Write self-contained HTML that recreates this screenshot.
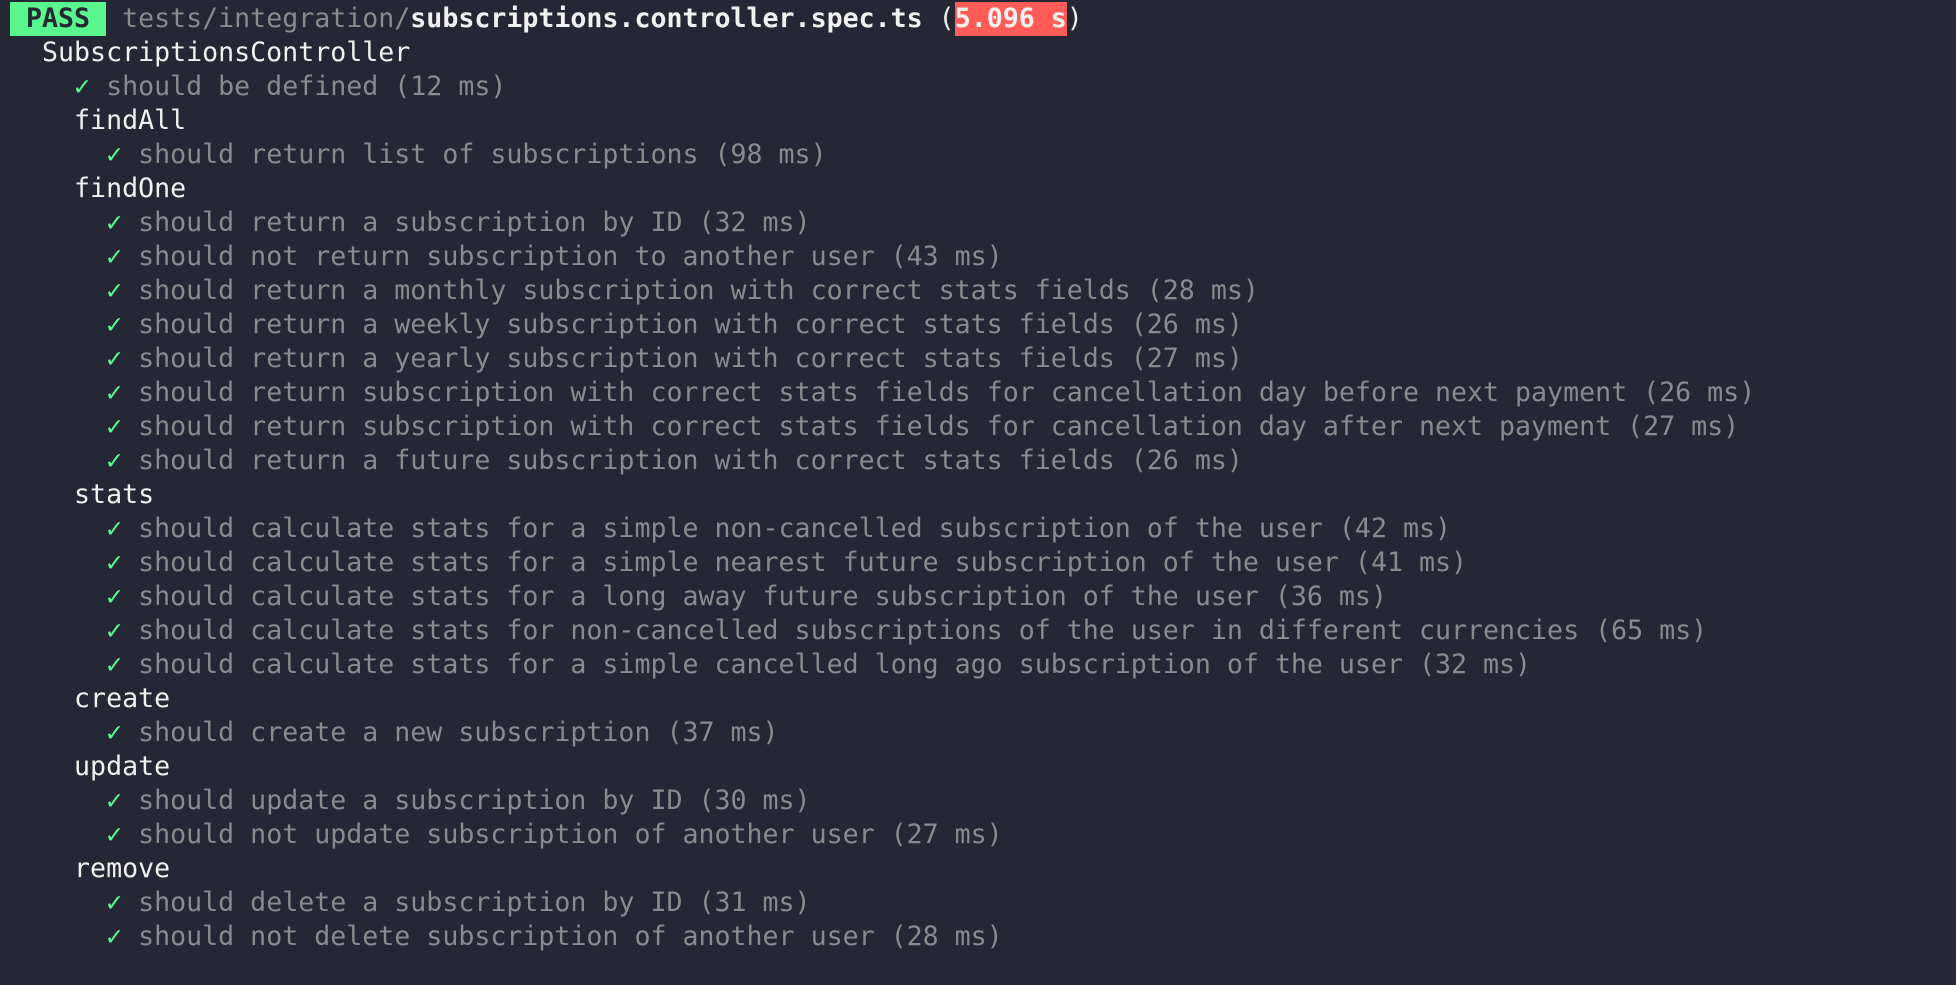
<!DOCTYPE html>
<html><head><meta charset="utf-8"><style>
html,body{margin:0;padding:0;background:#262734;width:1956px;height:985px;overflow:hidden}
pre{margin:0;padding:2px 0 0 10px;font-family:"DejaVu Sans Mono","Liberation Mono",monospace;font-size:26.6px;line-height:34px;color:#f1f1f0;white-space:pre}
.g{color:#8a8a8e}.c{color:#5af78e}.b{font-weight:bold}
.pass{background:#5af78e;color:#262734;font-weight:bold;display:inline-block;line-height:34px;margin-top:-1px}
.t{background:#ff5c57;color:#f1f1f0;font-weight:bold;display:inline-block;line-height:34px;margin-top:-1px}
</style></head><body><pre><span class="pass"> PASS </span> <span class="g">tests/integration/</span><span class="b">subscriptions.controller.spec.ts</span> (<span class="t">5.096 s</span>)
  SubscriptionsController
    <span class="c">✓</span> <span class="g">should be defined (12 ms)</span>
    findAll
      <span class="c">✓</span> <span class="g">should return list of subscriptions (98 ms)</span>
    findOne
      <span class="c">✓</span> <span class="g">should return a subscription by ID (32 ms)</span>
      <span class="c">✓</span> <span class="g">should not return subscription to another user (43 ms)</span>
      <span class="c">✓</span> <span class="g">should return a monthly subscription with correct stats fields (28 ms)</span>
      <span class="c">✓</span> <span class="g">should return a weekly subscription with correct stats fields (26 ms)</span>
      <span class="c">✓</span> <span class="g">should return a yearly subscription with correct stats fields (27 ms)</span>
      <span class="c">✓</span> <span class="g">should return subscription with correct stats fields for cancellation day before next payment (26 ms)</span>
      <span class="c">✓</span> <span class="g">should return subscription with correct stats fields for cancellation day after next payment (27 ms)</span>
      <span class="c">✓</span> <span class="g">should return a future subscription with correct stats fields (26 ms)</span>
    stats
      <span class="c">✓</span> <span class="g">should calculate stats for a simple non-cancelled subscription of the user (42 ms)</span>
      <span class="c">✓</span> <span class="g">should calculate stats for a simple nearest future subscription of the user (41 ms)</span>
      <span class="c">✓</span> <span class="g">should calculate stats for a long away future subscription of the user (36 ms)</span>
      <span class="c">✓</span> <span class="g">should calculate stats for non-cancelled subscriptions of the user in different currencies (65 ms)</span>
      <span class="c">✓</span> <span class="g">should calculate stats for a simple cancelled long ago subscription of the user (32 ms)</span>
    create
      <span class="c">✓</span> <span class="g">should create a new subscription (37 ms)</span>
    update
      <span class="c">✓</span> <span class="g">should update a subscription by ID (30 ms)</span>
      <span class="c">✓</span> <span class="g">should not update subscription of another user (27 ms)</span>
    remove
      <span class="c">✓</span> <span class="g">should delete a subscription by ID (31 ms)</span>
      <span class="c">✓</span> <span class="g">should not delete subscription of another user (28 ms)</span>
</pre></body></html>
